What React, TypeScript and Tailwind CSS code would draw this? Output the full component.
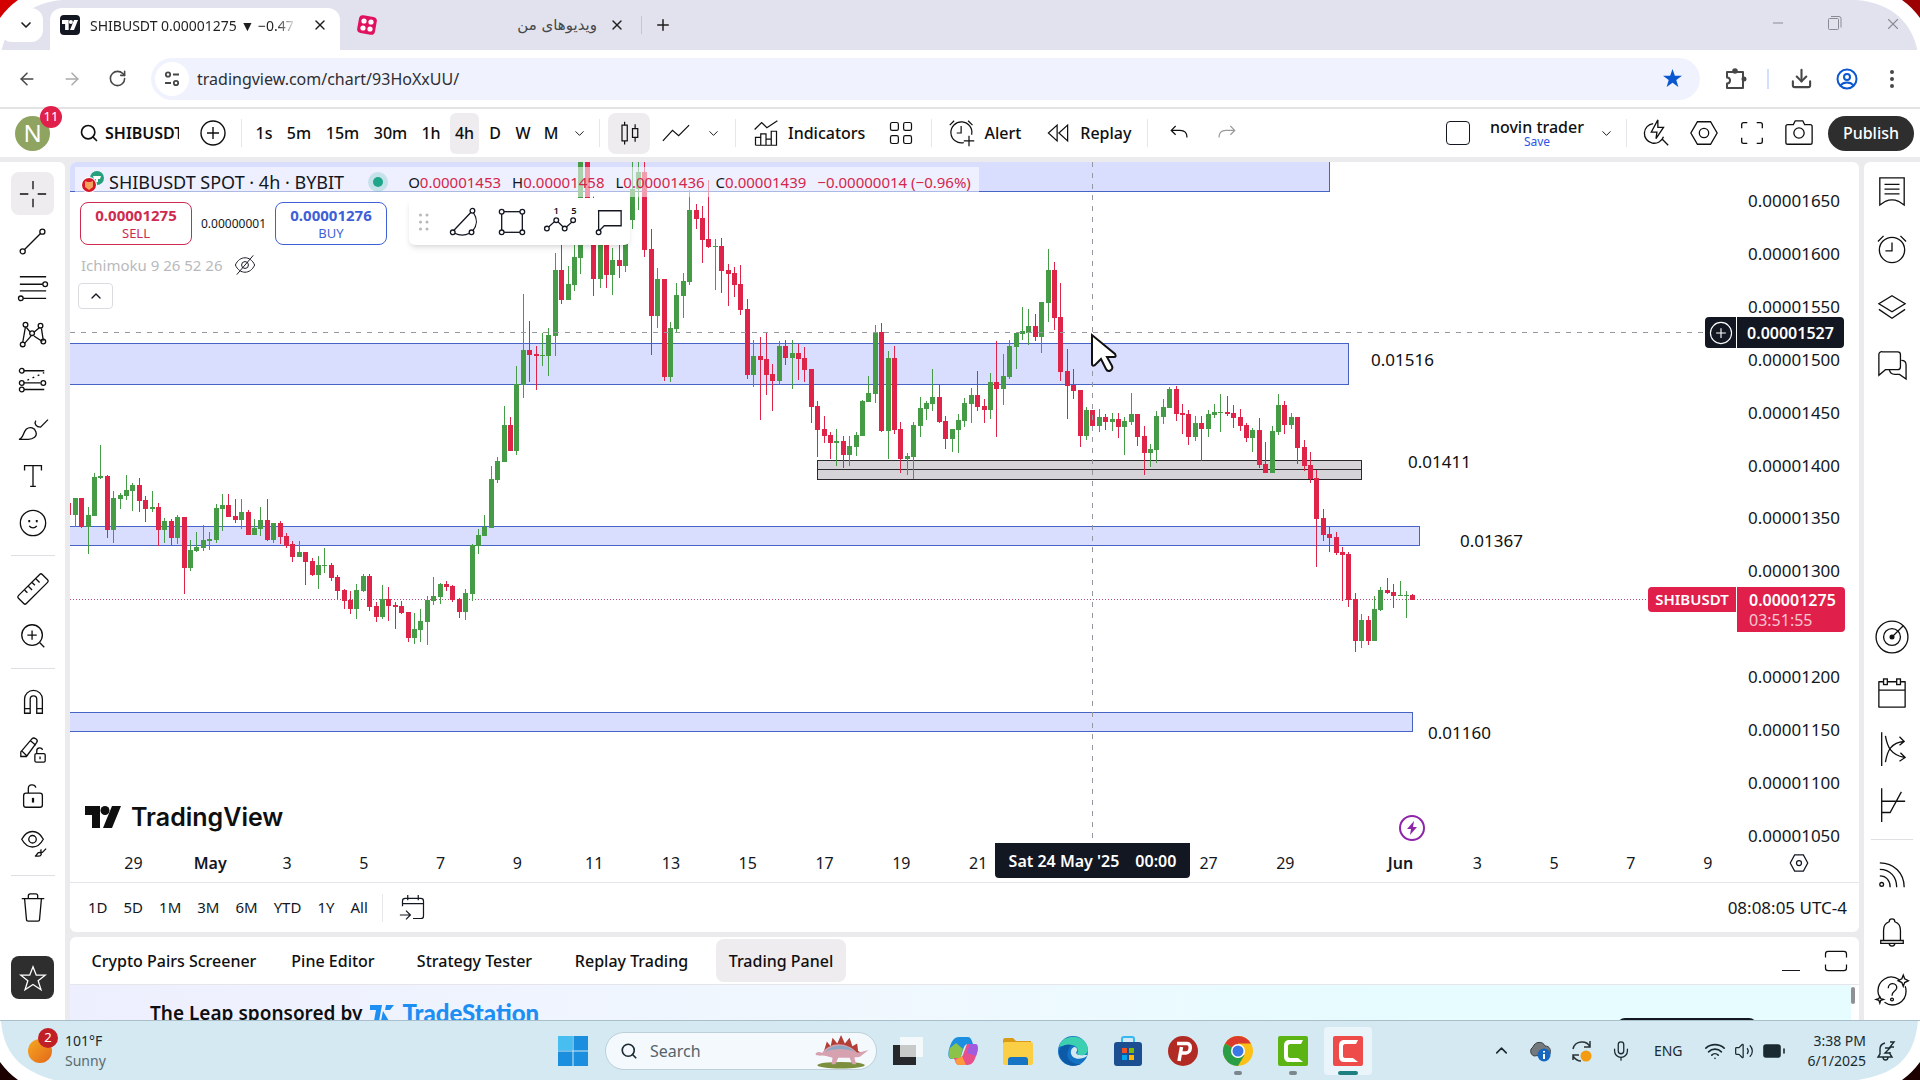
import React from "react";
import {
  ArrowLeft,
  ArrowRight,
  Battery,
  ChevronDown,
  ChevronUp,
  Download,
  EllipsisVertical,
  Mic,
  Minus,
  Plus,
  RotateCw,
  Search,
  Volume2,
  Wifi,
  X,
} from "lucide-react";

type Candle = [string, number, number, number, number];

// colour, high, body top, body bottom, low
const candles: Candle[] = [
  ["r", 341, 341, 353, 353], ["g", 336, 336, 353, 365], ["r", 336, 336, 365, 366], ["g", 345, 353, 365, 392],
  ["g", 311, 315, 354, 354], ["g", 283, 314, 316, 317], ["r", 313, 314, 368, 376], ["g", 329, 336, 368, 381],
  ["g", 331, 333, 337, 347], ["g", 313, 328, 334, 338], ["g", 321, 323, 329, 349], ["r", 316, 323, 339, 350],
  ["r", 334, 338, 347, 360], ["g", 329, 345, 347, 350], ["r", 341, 345, 368, 384], ["g", 356, 359, 368, 381],
  ["r", 357, 359, 376, 383], ["g", 353, 355, 376, 382], ["r", 355, 355, 406, 432], ["g", 378, 388, 406, 409],
  ["g", 370, 385, 389, 390], ["g", 363, 378, 386, 389], ["g", 370, 377, 379, 388], ["g", 342, 346, 378, 381],
  ["g", 332, 343, 347, 369], ["r", 332, 343, 355, 355], ["r", 337, 354, 358, 361], ["g", 337, 350, 358, 367],
  ["r", 348, 350, 373, 373], ["g", 357, 366, 373, 373], ["g", 345, 358, 367, 374], ["r", 337, 358, 378, 379],
  ["g", 361, 361, 378, 381], ["r", 359, 361, 375, 382], ["r", 371, 374, 384, 386], ["r", 379, 382, 395, 400],
  ["g", 379, 390, 395, 395], ["r", 390, 390, 400, 423], ["r", 396, 399, 413, 414], ["g", 394, 403, 413, 427],
  ["g", 386, 403, 404, 411], ["r", 401, 403, 416, 419], ["r", 413, 415, 429, 437], ["r", 427, 428, 439, 447],
  ["r", 429, 438, 447, 452], ["g", 422, 428, 447, 457], ["g", 412, 414, 429, 430], ["r", 412, 414, 445, 449],
  ["r", 440, 444, 455, 460], ["g", 423, 437, 455, 457], ["r", 425, 437, 444, 459], ["r", 440, 443, 445, 467],
  ["r", 439, 444, 451, 452], ["r", 450, 450, 476, 480], ["g", 451, 467, 476, 482], ["g", 447, 459, 468, 480],
  ["g", 434, 438, 460, 483], ["g", 415, 434, 439, 443], ["g", 421, 422, 435, 442], ["r", 419, 422, 425, 429],
  ["r", 423, 424, 438, 440], ["r", 436, 437, 450, 456], ["g", 427, 431, 450, 458], ["g", 382, 383, 432, 439],
  ["g", 367, 373, 384, 392], ["g", 353, 365, 374, 374], ["g", 304, 317, 366, 366], ["g", 295, 299, 318, 321],
  ["g", 244, 263, 300, 300], ["r", 255, 263, 289, 289], ["g", 204, 222, 289, 293], ["g", 132, 188, 223, 236],
  ["r", 159, 188, 193, 220], ["r", 184, 192, 194, 228], ["g", 171, 193, 194, 204], ["g", 166, 173, 194, 214],
  ["g", 91, 108, 174, 194], ["r", 81, 108, 138, 142], ["g", 104, 122, 138, 138], ["g", 81, 95, 123, 129],
  ["g", 0, 0, 96, 112], ["r", 0, 0, 58, 64], ["r", 34, 58, 117, 134], ["g", 64, 74, 117, 126],
  ["r", 64, 74, 113, 126], ["g", 86, 98, 113, 133], ["r", 81, 98, 104, 116], ["g", 58, 58, 104, 110],
  ["g", 0, 27, 58, 67], ["g", 0, 10, 27, 48], ["r", 0, 10, 88, 95], ["r", 67, 87, 154, 193],
  ["g", 106, 117, 154, 166], ["r", 117, 117, 215, 219], ["g", 160, 166, 215, 220], ["g", 121, 133, 167, 170],
  ["g", 111, 119, 134, 156], ["g", 28, 48, 120, 123], ["r", 42, 48, 57, 67], ["r", 44, 56, 78, 101],
  ["r", 18, 77, 85, 86], ["g", 77, 84, 85, 128], ["r", 76, 84, 109, 131], ["r", 102, 108, 112, 144],
  ["r", 105, 111, 123, 135], ["r", 103, 122, 148, 153], ["r", 137, 147, 213, 217], ["g", 178, 194, 213, 225],
  ["r", 175, 194, 198, 258], ["r", 170, 197, 213, 233], ["r", 202, 212, 219, 249], ["g", 179, 184, 219, 223],
  ["r", 178, 184, 196, 203], ["g", 178, 191, 196, 227], ["r", 182, 191, 197, 218], ["r", 185, 196, 208, 220],
  ["r", 207, 207, 245, 261], ["r", 239, 244, 268, 295], ["r", 254, 267, 274, 281], ["r", 270, 273, 281, 297],
  ["g", 267, 279, 281, 304], ["r", 274, 279, 293, 306], ["g", 274, 284, 293, 304], ["g", 270, 273, 285, 294],
  ["g", 238, 239, 274, 274], ["g", 214, 231, 240, 240], ["g", 163, 170, 232, 241], ["r", 161, 170, 269, 270],
  ["g", 189, 196, 269, 297], ["r", 184, 196, 268, 272], ["r", 260, 267, 297, 311], ["g", 291, 294, 297, 313],
  ["g", 260, 263, 295, 317], ["g", 235, 246, 264, 275], ["g", 239, 241, 247, 258], ["g", 207, 235, 242, 249],
  ["r", 223, 235, 260, 261], ["r", 254, 259, 277, 287], ["g", 267, 267, 277, 290], ["g", 252, 258, 268, 291],
  ["g", 236, 241, 259, 265], ["g", 226, 233, 242, 261], ["r", 209, 233, 245, 249], ["r", 237, 244, 248, 261],
  ["g", 211, 220, 248, 257], ["r", 179, 220, 227, 275], ["g", 192, 214, 227, 243], ["g", 178, 184, 215, 217],
  ["g", 170, 171, 185, 207], ["g", 145, 169, 172, 178], ["g", 147, 164, 171, 183], ["r", 152, 164, 175, 179],
  ["g", 140, 140, 175, 191], ["g", 87, 108, 141, 160], ["r", 100, 108, 156, 168], ["r", 121, 155, 210, 219],
  ["r", 187, 209, 224, 257], ["r", 207, 223, 229, 237], ["r", 228, 228, 274, 285], ["g", 245, 248, 274, 278],
  ["r", 248, 248, 264, 264], ["g", 247, 255, 264, 270], ["r", 252, 255, 260, 268], ["g", 251, 257, 260, 269],
  ["r", 251, 257, 265, 276], ["g", 255, 259, 265, 293], ["g", 231, 252, 260, 263], ["r", 252, 252, 275, 284],
  ["r", 264, 274, 291, 313], ["g", 282, 287, 291, 305], ["g", 249, 254, 288, 301], ["g", 237, 245, 255, 262],
  ["g", 225, 227, 246, 246], ["r", 224, 227, 252, 259], ["r", 242, 251, 253, 272], ["r", 248, 252, 275, 283],
  ["g", 254, 261, 275, 279], ["r", 254, 261, 267, 299], ["g", 248, 252, 267, 275], ["g", 242, 250, 253, 256],
  ["g", 232, 250, 251, 270], ["r", 234, 250, 252, 254], ["r", 243, 251, 256, 266], ["r", 247, 255, 264, 269],
  ["r", 261, 263, 276, 280], ["g", 266, 268, 276, 290], ["r", 256, 268, 303, 306], ["r", 280, 302, 311, 311],
  ["g", 264, 269, 311, 311], ["g", 232, 243, 270, 273], ["r", 239, 243, 263, 272], ["g", 251, 255, 263, 267],
  ["r", 255, 255, 286, 302], ["r", 278, 285, 304, 309], ["r", 290, 303, 317, 321], ["r", 308, 316, 357, 405],
  ["r", 347, 356, 373, 379], ["r", 365, 372, 376, 390], ["r", 370, 375, 391, 393], ["r", 385, 390, 393, 439],
  ["r", 390, 392, 438, 445], ["r", 431, 437, 479, 490], ["g", 452, 458, 479, 486], ["r", 454, 458, 479, 483],
  ["g", 434, 447, 479, 479], ["g", 425, 428, 448, 449], ["r", 416, 428, 431, 432], ["r", 422, 430, 434, 446],
  ["g", 419, 433, 434, 434], ["g", 429, 433, 434, 456], ["r", 432, 433, 438, 438],
];

const timeframes = [
  { label: "1s", width: "w-[32px]" },
  { label: "5m", width: "w-[38px]" },
  { label: "15m", width: "w-[49px]" },
  { label: "30m", width: "w-[47px]" },
  { label: "1h", width: "w-[34px]" },
  { label: "4h", width: "w-[29px] mx-0.5 bg-[#eeecef]" },
  { label: "D", width: "w-[28px]" },
  { label: "W", width: "w-[28px]" },
  { label: "M", width: "w-[28px]" },
];

const prices = [
  "0.00001650", "0.00001600", "0.00001550", "0.00001500", "0.00001450", "0.00001400", "0.00001350",
  "0.00001300", "", "0.00001200", "0.00001150", "0.00001100", "0.00001050",
];

// an empty label keeps the slot; days is the share of the axis it takes
const dates = [
  { label: "29", days: 2 },
  { label: "May", days: 2, bold: true },
  { label: "3", days: 2 },
  { label: "5", days: 2 },
  { label: "7", days: 2 },
  { label: "9", days: 2 },
  { label: "11", days: 2 },
  { label: "13", days: 2 },
  { label: "15", days: 2 },
  { label: "17", days: 2 },
  { label: "19", days: 2 },
  { label: "21", days: 2 },
  { label: "", days: 4 },
  { label: "27", days: 2 },
  { label: "29", days: 2 },
  { label: "", days: 1 },
  { label: "Jun", days: 2, bold: true },
  { label: "3", days: 2 },
  { label: "5", days: 2 },
  { label: "7", days: 2 },
  { label: "9", days: 2 },
];

const ranges = ["1D", "5D", "1M", "3M", "6M", "YTD", "1Y", "All"];

type IconProps = { children: React.ReactNode; className?: string };

function Icon({ children, className = "size-8" }: IconProps) {
  return (
    <svg
      viewBox="0 0 32 32"
      className={`shrink-0 ${className}`}
      fill="none"
      stroke="currentColor"
      strokeWidth="1.4"
    >
      {children}
    </svg>
  );
}

const leftTools = [
  {
    name: "Trend line",
    icon: (
      <>
        <circle cx="5" cy="27" r="2.7" />
        <circle cx="26" cy="6" r="2.7" />
        <path d="M7 25 24 8" />
      </>
    ),
  },
  {
    name: "Fib retracement",
    icon: (
      <>
        <path d="M2 4h28M2 12h25M2 19h28M5 27h25" />
        <circle cx="29" cy="12" r="2.5" fill="white" />
        <circle cx="3" cy="27" r="2.5" fill="white" />
      </>
    ),
  },
  {
    name: "Patterns",
    icon: (
      <>
        <path d="M8 7 5 24M9 8l4 5M7 25l7-8M17 13l6-5M17 17l9 6M25 9l2 13" />
        <circle cx="8" cy="5" r="2.5" />
        <circle cx="24" cy="6" r="2.5" />
        <circle cx="15" cy="14" r="2.5" />
        <circle cx="5" cy="26" r="2.5" />
        <circle cx="27" cy="23" r="2.5" />
      </>
    ),
  },
  {
    name: "Prediction",
    icon: (
      <>
        <path d="M6 4h22M6 17h18M6 24h22" />
        <path d="M10 14 28 6" strokeDasharray="2 4" />
        <circle cx="4" cy="4" r="2.5" />
        <circle cx="4" cy="17" r="2.5" />
        <circle cx="27" cy="17" r="2.5" fill="white" />
        <circle cx="4" cy="24" r="2.5" fill="white" />
      </>
    ),
  },
  {
    name: "Brush",
    icon: (
      <>
        <path d="M1 27c5-1 4-7 8-11 4-3 9-1 10 3 2 5-3 8-8 8H1Z" />
        <path d="M32 6 24 14c-5 0-7-4-5-7" />
      </>
    ),
  },
  { name: "Text", icon: <path d="M7 10V5h18v5M16 5v22M13 27h6" /> },
  {
    name: "Icon",
    icon: (
      <>
        <circle cx="16" cy="16" r="13.5" />
        <path d="M11 14h2M19 14h2" strokeWidth="2.4" />
        <path d="M12 19c2 3 6 3 8 0" />
      </>
    ),
  },
];

const measureTools = [
  {
    name: "Measure",
    icon: (
      <>
        <rect x="10" y="-2" width="12" height="36" rx="2" transform="rotate(45 16 16)" />
        <path d="m7 17 3 3M11 13l4 4M15 9l3 3M19 5l4 4" />
      </>
    ),
  },
  {
    name: "Zoom in",
    icon: (
      <>
        <circle cx="15" cy="15" r="11" />
        <path d="m23 23 5 5M15 10v10M10 15h10" />
      </>
    ),
  },
];

const stateTools = [
  {
    name: "Magnet",
    icon: (
      <path d="M7 28V13a9 9 0 0 1 19 0v15h-6V13a3.500 3.500 0 0 0-7 0v15H7ZM7 23h6M20 23h6" />
    ),
  },
  {
    name: "Stay in drawing mode",
    icon: (
      <>
        <path d="M3 19 15 5c2-2 7 1 5 4L9 24H3v-5ZM13 7l6 5M4 18l5 5" />
        <rect x="18" y="21" width="11" height="9" rx="1.500" />
        <path d="M20 21v-3c0-4 6-4 6-1M23.500 24v3" />
      </>
    ),
  },
  {
    name: "Lock all drawings",
    icon: (
      <>
        <rect x="6" y="13" width="20" height="15" rx="2.500" />
        <path d="M11 13V8c0-5 7-5 8-1" />
        <path d="M16 18v5" strokeWidth="2.400" />
      </>
    ),
  },
  {
    name: "Hide all drawings",
    icon: (
      <>
        <path d="M4 12c6-11 17-11 23 0-6 11-17 11-23 0Z" />
        <circle cx="15.500" cy="12" r="4" />
        <path d="M18 30c2 0 2-4 5-4 3 1 2 4-1 4h-4ZM30 22l-4 4c-2 0-2-2-1-3" />
      </>
    ),
  },
];

const rightTop = [
  {
    name: "Watchlist",
    icon: <path d="M3 2h26v29l-6-4q-7-3-14 0l-6 4V2ZM8 9h16M8 14h16M8 19h16" />,
  },
  {
    name: "Alerts",
    icon: (
      <>
        <circle cx="16" cy="17" r="13.500" />
        <path d="M16 9v9h-7M1 8l6-6M31 8l-6-6" />
      </>
    ),
  },
  {
    name: "Object tree",
    icon: <path d="m16 4 14 8.500L16 21 2 12.500 16 4ZM2 18.500 16 28l14-9.500" />,
  },
  {
    name: "Chats",
    icon: (
      <path d="M6 2h16a3 3 0 0 1 3 3v13a3 3 0 0 1-3 3H9l-7 6V5a3 3 0 0 1 4-3ZM13 21c1 4 3 5 6 5h5l7 5V16c0-3-2-5-5-5" />
    ),
  },
];

const rightMiddle = [
  {
    name: "Screener",
    icon: (
      <>
        <circle cx="16" cy="16" r="17" />
        <circle cx="16" cy="16" r="9" />
        <circle cx="16" cy="16" r="2" fill="currentColor" />
        <path d="m16 16 12-12" />
      </>
    ),
  },
  {
    name: "Calendar",
    icon: (
      <>
        <path d="M2 4h28v27H2V4ZM2 13h28" strokeLinejoin="round" />
        <rect x="7" y="1" width="4" height="6" fill="white" />
        <rect x="21" y="1" width="4" height="6" fill="white" />
      </>
    ),
  },
  {
    name: "Options",
    icon: (
      <path d="M5-2v36M9 2c2 12 6 20 20 23M9 30C11 18 15 9 29 8M24 3l5 5-5 4M25 20l5 5-6 4" />
    ),
  },
  { name: "DOM", icon: <path d="M5-2v36M5 12h25M5 24h9l12-22" /> },
];

const rightBottom = [
  {
    name: "Streams",
    icon: (
      <>
        <circle cx="5" cy="26" r="2" />
        <path d="M3 17c7 0 11 5 11 12M3 10c11 0 18 8 18 19M3 3c15 0 26 11 26 26" />
      </>
    ),
  },
  {
    name: "Notifications",
    icon: (
      <path d="M7 24V13c0-5 3-8 6-9 0-4 6-4 6 0 3 1 6 4 6 9v11M4 24h24v3H4v-3ZM13 27c0 4 6 4 6 0" />
    ),
  },
  {
    name: "Help",
    icon: (
      <>
        <path d="M24 4C12-4 1 6 1 16c0 3 1 5 2 7M8 28c10 7 23 0 23-12 0-2 0-3-1-5" />
        <path d="M12 13c0-7 10-6 9 0-1 4-5 3-5 8" />
        <circle cx="16" cy="25" r="1.500" />
        <path d="m28-1 1.500 4 4 2-4 2-1.500 4-1.500-4-4-2 4-2 1.500-4ZM3 22l1 2 3 1-3 1-1 3-1-3-3-1 3-1 1-2Z" />
      </>
    ),
  },
];

type Tool = { name: string; icon: React.ReactNode };

function ToolList({ tools, cell }: { tools: Tool[]; cell: string }) {
  return (
    <>
      {tools.map((t) => (
        <button key={t.name} aria-label={t.name} className={`flex w-full items-center justify-center ${cell}`}>
          <Icon className="size-[30px] overflow-visible">{t.icon}</Icon>
        </button>
      ))}
    </>
  );
}

function Divider() {
  return <div className="h-7 w-px shrink-0 bg-[#e6e6ea]" />;
}

function TvMark({ className = "" }: { className?: string }) {
  return (
    <svg viewBox="0 0 36 22" className={className} fill="currentColor">
      <path d="M0 0h15v22H7V9H0V0Z" />
      <circle cx="20" cy="4.500" r="4.500" />
      <path d="M27 0h9l-9 22h-9L27 0Z" />
    </svg>
  );
}

function BrowserTabs() {
  return (
    <div className="flex h-[50px] shrink-0 items-end bg-[#e1e2ee] text-[14px] text-[#1f1f1f]">
      <button aria-label="Search tabs" className="mb-2 flex h-[34px] w-[43px] items-center justify-center rounded-xl bg-white pl-2">
        <ChevronDown size={16} strokeWidth={2.5} />
      </button>
      <div className="ml-[7px] flex h-[42px] w-[290px] items-center rounded-t-xl bg-white pl-2.5 pr-3 pb-2">
        <span className="flex size-5 shrink-0 items-center justify-center rounded bg-[#131722] text-white">
          <TvMark className="h-2.5 w-4" />
        </span>
        <span className="ml-2.5 w-[207px] overflow-hidden whitespace-nowrap bg-linear-to-r from-[#1f1f1f] from-90% to-transparent bg-clip-text text-transparent">
          SHIBUSDT 0.00001275 ▼ −0.47
        </span>
        <button aria-label="Close tab" className="ml-auto">
          <X size={16} strokeWidth={2} />
        </button>
      </div>
      <div className="flex h-[42px] w-[301px] items-center pb-2 pl-[17px] pr-4">
        <svg viewBox="0 0 20 20" className="size-5">
          <rect x="1" y="1" width="18" height="18" rx="4" fill="#e0115f" transform="rotate(10 10 10)" />
          <g fill="#fff">
            <circle cx="7" cy="6" r="2.600" />
            <circle cx="14" cy="7" r="2.600" />
            <circle cx="6" cy="13" r="2.600" />
            <circle cx="13" cy="14" r="2.600" />
          </g>
        </svg>
        <span dir="rtl" className="ml-auto mr-3 font-['DejaVu_Sans',sans-serif] text-[15px] text-[#474747]">
          ویدیوهای من
        </span>
        <button aria-label="Close tab">
          <X size={16} strokeWidth={2} />
        </button>
      </div>
      <div className="mb-4 h-[18px] w-px bg-[#c5c6d0]" />
      <button aria-label="New tab" className="mb-4 ml-3">
        <Plus size={18} />
      </button>
      <div className="mb-[17px] ml-auto mr-[18px] flex gap-[41px] text-[#8b8b93]">
        <Minus size={16} strokeWidth={1.500} />
        <svg viewBox="0 0 16 16" className="size-4" fill="none" stroke="currentColor">
          <rect x="1.500" y="3.500" width="10" height="11" rx="1" />
          <path d="M4 1.500h8a2 2 0 0 1 2 2v9" />
        </svg>
        <X size={18} strokeWidth={1.500} />
      </div>
    </div>
  );
}

function AddressBar() {
  return (
    <div className="flex h-[59px] shrink-0 items-center border-b-2 border-[#e3e3e3] bg-white pl-[17px] pr-4 text-[#474747]">
      <ArrowLeft size={20} strokeWidth={1.800} />
      <ArrowRight size={20} strokeWidth={1.800} className="ml-[25px] text-[#aaa]" />
      <RotateCw size={19} strokeWidth={2} className="ml-[26px]" />
      <div className="ml-6 flex h-[42px] flex-1 items-center rounded-full bg-[#f0f2fe] pl-1 pr-[18px]">
        <span className="flex size-[34px] items-center justify-center rounded-full bg-white">
          <svg viewBox="0 0 18 18" className="size-[18px]" fill="none" stroke="currentColor" strokeWidth="1.800">
            <circle cx="5" cy="4.500" r="2.200" />
            <circle cx="13" cy="13" r="2.200" />
            <path d="M10 4.500h6M2 13h6" />
          </svg>
        </span>
        <input
          aria-label="Address"
          readOnly
          value="tradingview.com/chart/93HoXxUU/"
          className="ml-2 min-w-0 flex-1 bg-transparent text-[16px] text-[#2d2f33] outline-none"
        />
        <svg viewBox="0 0 20 20" className="size-[19px]" fill="#0b57d0">
          <path d="m10 0 2.500 7H20l-6 4.500L16.200 19 10 14.600 3.800 19 6 11.500 0 7h7.500L10 0Z" />
        </svg>
      </div>
      <svg viewBox="0 0 24 24" className="ml-[23px] size-6" fill="none" stroke="currentColor" strokeWidth="2">
        <path d="M4 5h16v16H4v-4.500a3 3 0 0 0 0-6V5Z" strokeLinejoin="round" />
        <circle cx="12" cy="4" r="1.800" fill="currentColor" />
        <circle cx="21" cy="12" r="1.500" fill="currentColor" />
      </svg>
      <div className="ml-5 h-5 w-0.5 bg-[#d3e0fb]" />
      <Download size={23} strokeWidth={2.200} className="ml-[21px]" />
      <svg viewBox="0 0 22 22" className="ml-[23px] size-[22px] text-[#0b57d0]" fill="none" stroke="currentColor" strokeWidth="2">
        <circle cx="11" cy="11" r="9.500" />
        <circle cx="11" cy="9" r="3" />
        <path d="M4.500 17.500c3-4 10-4 13 0" />
      </svg>
      <EllipsisVertical size={24} className="ml-[22px]" />
    </div>
  );
}

function Header() {
  return (
    <header className="flex h-12 shrink-0 items-center bg-white text-[16px] font-medium text-[#0f0f0f]">
      <div className="relative ml-[15px] flex size-[35px] items-center justify-center rounded-full bg-[#8fa461] text-[24px] font-normal text-white">
        N
        <span className="absolute -top-2.5 left-[25px] flex size-[22px] items-center justify-center rounded-full bg-[#e0204a] text-[13px]">
          11
        </span>
      </div>
      <button className="ml-[29px] flex items-center gap-1.5 font-semibold">
        <Search size={20} strokeWidth={2} />
        <span className="w-[74px] overflow-hidden whitespace-nowrap text-left">SHIBUSDT</span>
      </button>
      <button aria-label="Compare" className="ml-[18px]">
        <Icon className="size-8">
          <circle cx="16" cy="16" r="12" />
          <path d="M16 10v12M10 16h12" />
        </Icon>
      </button>
      <div className="ml-3">
        <Divider />
      </div>
      <div className="ml-1.5 flex">
        {timeframes.map((t) => (
          <button key={t.label} className={`flex h-[41px] items-center justify-center rounded-md ${t.width}`}>
            {t.label}
          </button>
        ))}
        <button aria-label="More intervals" className="flex w-7 items-center justify-center">
          <ChevronDown size={15} strokeWidth={1.500} />
        </button>
      </div>
      <div className="ml-1.5 mr-2">
        <Divider />
      </div>
      <button aria-label="Candles" className="flex h-[41px] w-[42px] items-center justify-center rounded-lg bg-[#eeecef]">
        <Icon className="size-7">
          <rect x="8" y="7" width="6" height="18" />
          <rect x="20" y="11" width="6" height="10" />
          <path d="M11 3v4M11 25v4M23 6v5M23 21v5" />
        </Icon>
      </button>
      <button aria-label="Line tools" className="ml-3">
        <Icon className="size-7">
          <path d="m1 25 11-12 7 6L31 7" />
        </Icon>
      </button>
      <ChevronDown size={15} strokeWidth={1.500} className="ml-4" />
      <div className="ml-3.5 mr-4">
        <Divider />
      </div>
      <button className="flex items-center gap-2">
        <Icon className="size-7">
          <path d="m3 12 8-8 6 6L29 2" />
          <path d="M4 30v-9h6v9M10 25v-8h6v13M16 23h6v7M22 30V14h6v16H4" />
        </Icon>
        <span>Indicators</span>
      </button>
      <button aria-label="Templates" className="ml-[22px]">
        <Icon className="size-7">
          <rect x="4" y="4" width="9" height="9" rx="2" />
          <rect x="19" y="4" width="9" height="9" rx="2" />
          <rect x="4" y="19" width="9" height="9" rx="2" />
          <rect x="19" y="19" width="9" height="9" rx="2" />
        </Icon>
      </button>
      <div className="ml-4 mr-4">
        <Divider />
      </div>
      <button className="flex items-center gap-2">
        <Icon className="size-7">
          <path d="M18 27A12 12 0 1 1 27 18M15 8v8h-5M2 7l5-5M28 7l-5-5M24 19v12M18 25h12" />
        </Icon>
        <span>Alert</span>
      </button>
      <button className="ml-[23px] flex items-center gap-2">
        <Icon className="size-7">
          <path d="M15 7v18L5 16l10-9ZM27 7v18l-10-9 10-9Z" />
        </Icon>
        <span>Replay</span>
      </button>
      <div className="ml-4 mr-[18px]">
        <Divider />
      </div>
      <button aria-label="Undo">
        <Icon className="size-7">
          <path d="M11 8 6 13l5 5M6 13h10c6 0 8 3 8 8" />
        </Icon>
      </button>
      <button aria-label="Redo" className="ml-[18px] text-[#9a9a9a]">
        <Icon className="size-7">
          <path d="m21 8 5 5-5 5M26 13H16c-6 0-8 3-8 8" />
        </Icon>
      </button>

      <div className="ml-auto flex items-center pr-1.5">
        <button aria-label="Layout" className="size-6 rounded border border-[#131722]" />
        <button className="ml-5 flex flex-col items-center">
          <span className="text-[16px] leading-[18px]">novin trader</span>
          <span className="text-[12px] leading-3 font-normal text-[#2f55e8]">Save</span>
        </button>
        <ChevronDown size={15} strokeWidth={1.500} className="ml-[15px]" />
        <div className="ml-3 mr-[14px]">
          <Divider />
        </div>
        <button aria-label="Quick search">
          <Icon className="size-[30px]">
            <path d="M13 6A10.500 10.500 0 1 0 24 20M23 23l6 6M18 2l-7 13h6l-1 7 8-12h-6V2Z" />
          </Icon>
        </button>
        <button aria-label="Settings" className="ml-[18px]">
          <Icon className="size-[30px]">
            <path d="M9 4h14l7 12-7 12H9L2 16 9 4Z" />
            <circle cx="16" cy="16" r="5" />
          </Icon>
        </button>
        <button aria-label="Fullscreen" className="ml-[18px]">
          <Icon className="size-[30px]">
            <path d="M5 11V7a2 2 0 0 1 2-2h4M21 5h4a2 2 0 0 1 2 2v4M27 21v4a2 2 0 0 1-2 2h-4M11 27H7a2 2 0 0 1-2-2v-4" />
          </Icon>
        </button>
        <button aria-label="Snapshot" className="ml-[17px]">
          <Icon className="size-[30px]">
            <path d="M4 7h6l2-4h8l2 4h6a2 2 0 0 1 2 2v17a2 2 0 0 1-2 2H4a2 2 0 0 1-2-2V9a2 2 0 0 1 2-2Z" />
            <circle cx="16" cy="16" r="5.500" />
          </Icon>
        </button>
        <button className="ml-3.5 h-[35px] w-[86px] rounded-full bg-[#2e2e2e] text-white">Publish</button>
      </div>
    </header>
  );
}

function LeftToolbar() {
  return (
    <aside className="flex w-[65px] shrink-0 flex-col items-center rounded-tr-md bg-white pt-2 text-[#0f0f0f]">
      <div className="flex h-[47px] items-center">
        <button aria-label="Cross" className="flex size-[43px] items-center justify-center rounded-lg bg-[#eeecef]">
          <Icon className="size-[30px]">
            <path d="M16 2v9M16 21v9M2 16h9M21 16h9" />
          </Icon>
        </button>
      </div>
      <ToolList tools={leftTools} cell="h-[47px]" />
      <div className="my-[9px] h-px w-11 shrink-0 bg-[#e0e0e4]" />
      <ToolList tools={measureTools} cell="h-[47px]" />
      <div className="my-[9px] h-px w-11 shrink-0 bg-[#e0e0e4]" />
      <ToolList tools={stateTools} cell="h-[47px]" />
      <div className="my-[9px] h-px w-11 shrink-0 bg-[#e0e0e4]" />
      <ToolList
        tools={[
          {
            name: "Remove objects",
            icon: <path d="M4 7h24M11 7V4c0-1 1-2 2-2h6c1 0 2 1 2 2v3M7 7l2 22c0 1 1 2 2 2h10c1 0 2-1 2-2l2-22" />,
          },
        ]}
        cell="h-[43px]"
      />
      <button aria-label="Favorites" className="mb-[21px] mt-auto flex size-[43px] items-center justify-center rounded-lg bg-[#2e2e2e] text-white">
        <Icon className="size-[30px]">
          <path d="m16 4 3.500 9H29l-7.500 6 3 9.500L16 23l-8.500 5.500 3-9.500L3 13h9.500L16 4Z" />
        </Icon>
      </button>
    </aside>
  );
}

function RightToolbar() {
  return (
    <aside className="flex w-14 shrink-0 flex-col items-center rounded-tl-md bg-white text-[#0f0f0f]">
      <ToolList tools={rightTop} cell="h-[58px]" />
      <div className="mt-auto" />
      <ToolList tools={rightMiddle} cell="h-[56px]" />
      <div className="my-1.5 h-px w-[42px] shrink-0 bg-[#e0e0e4]" />
      <ToolList tools={rightBottom} cell="h-[58px]" />
    </aside>
  );
}

function Chart() {
  const label = "fill-[#0f0f0f] text-[17px]";

  return (
    <svg viewBox="0 0 1667 681" className="block w-full overflow-visible" shapeRendering="crispEdges">
      <g fill="#d9deff" stroke="#4763c4">
        <rect x="-2" y="-2" width="1261" height="31" />
        <rect x="-2" y="181" width="1280" height="41" />
        <rect x="-2" y="364" width="1351" height="19" />
        <rect x="-2" y="550" width="1344" height="19" />
      </g>
      <rect x="747" y="298" width="544" height="19" fill="#d6d4d8" stroke="#2a2a2e" />
      <path d="M747 307.500h544" stroke="#2a2a2e" />
      <path d="M0 437.500h1578" stroke="#b5487c" strokeDasharray="1 2" />

      {candles.map(([color, high, top, bottom, low], i) => {
        const x = Math.round(1022.4 + 6.4 * (i - 160));

        return (
          <g key={i} fill={color === "g" ? "#459b46" : "#de2549"}>
            <rect x={x} y={high} width="1" height={Math.max(low - high, 1)} />
            <rect x={x - 2} y={top} width="5" height={Math.max(bottom - top, 1)} />
          </g>
        );
      })}

      <g stroke="#9598a1" strokeDasharray="5 6">
        <path d="M0 170.500h1635" />
        <path d="M1022.500 0v678" />
      </g>

      <text x="1301" y="204" className={label}>0.01516</text>
      <text x="1338" y="306" className={label}>0.01411</text>
      <text x="1390" y="385" className={label}>0.01367</text>
      <text x="1358" y="577" className={label}>0.01160</text>

      <g shapeRendering="auto">
        <circle cx="1342" cy="666" r="12" fill="white" stroke="#8e24aa" strokeWidth="2" />
        <path d="m1344 659-7 8h4l-1 6 7-8h-4l1-6Z" fill="#8e24aa" />
        <path
          d="M1022 173v29c0 2 1 2 3 1l6-6 5 10c2 4 8 1 6-3l-5-9h7c2 0 2-1 1-3Z"
          fill="white"
          stroke="#111"
          strokeWidth="2"
        />
      </g>
    </svg>
  );
}

function Legend() {
  const values = [
    ["O", "0.00001453"],
    ["H", "0.00001458"],
    ["L", "0.00001436"],
    ["C", "0.00001439"],
  ];

  return (
    <div className="absolute left-[5px] top-[5px] flex flex-col items-start text-[#131722]">
      <div className="flex h-[30px] items-center bg-white/55 pl-1.5 pr-2">
        <svg viewBox="0 0 24 24" className="size-6">
          <circle cx="16" cy="8" r="7" fill="#26a17b" />
          <path d="M12 6h8l-1 3h-2v3h-2V9h-2l-1-3Z" fill="#fff" />
          <circle cx="8" cy="15" r="8" fill="#fff" />
          <circle cx="8" cy="15" r="7" fill="#d8152a" />
          <path d="m4 11 2.500 1h3L12 11v6l-4 3-4-3v-6Z" fill="#f2a25c" />
        </svg>
        <span className="ml-1 text-[18px] leading-6">SHIBUSDT SPOT · 4h · BYBIT</span>
        <span className="ml-6 flex size-5 items-center justify-center rounded-full bg-[#22ab94]/20">
          <span className="size-2.5 rounded-full bg-[#1fa588]" />
        </span>
        <span className="ml-5 flex gap-[11px] text-[15px] leading-6">
          {values.map(([key, value]) => (
            <span key={key}>
              {key}
              <span className="text-[#d3264c]">{value}</span>
            </span>
          ))}
          <span className="text-[#d3264c]">−0.00000014 (−0.96%)</span>
        </span>
      </div>
      <div className="ml-[5px] mt-[5px] flex items-center">
        <button className="flex h-[43px] w-28 flex-col items-center justify-center rounded-lg border border-[#cf2b50] bg-white leading-[18px] text-[#cf2b50]">
          <span className="text-[15px] font-bold">0.00001275</span>
          <span className="text-[13px]">SELL</span>
        </button>
        <span className="w-[83px] text-center text-[12px]">0.00000001</span>
        <button className="flex h-[43px] w-28 flex-col items-center justify-center rounded-lg border border-[#3f5fd6] bg-white leading-[18px] text-[#3f5fd6]">
          <span className="text-[15px] font-bold">0.00001276</span>
          <span className="text-[13px]">BUY</span>
        </button>
      </div>
      <div className="ml-1.5 mt-2 flex h-6 items-center gap-3 text-[15px] text-[#b9b9bd]">
        Ichimoku 9 26 52 26
        <Icon className="size-[22px] text-[#131722]">
          <path d="M2 16c6-14 22-14 28 0-6 14-22 14-28 0ZM4 30 28 2" />
          <circle cx="16" cy="16" r="5" />
        </Icon>
      </div>
      <button aria-label="Collapse legend" className="ml-[3px] mt-1.5 flex h-[26px] w-[35px] items-center justify-center rounded border border-[#dcdce0] bg-white">
        <ChevronUp size={16} strokeWidth={2} />
      </button>
    </div>
  );
}

function DrawingBar() {
  return (
    <div className="absolute left-[339px] top-9 flex h-[47px] w-[221px] items-center rounded-md bg-white pl-2.5 text-[#131722] shadow-md">
      <svg viewBox="0 0 10 18" className="mr-5 h-[18px] w-2.5" fill="#b8b8bc">
        <circle cx="1.500" cy="2" r="1.500" />
        <circle cx="8" cy="2" r="1.500" />
        <circle cx="1.500" cy="9" r="1.500" />
        <circle cx="8" cy="9" r="1.500" />
        <circle cx="1.500" cy="16" r="1.500" />
        <circle cx="8" cy="16" r="1.500" />
      </svg>
      <div className="flex gap-[18px]">
        <button aria-label="Curve">
          <Icon className="size-[30px] overflow-visible">
            <path d="M5 25 24 5M26 6c6 9 3 15-1 20M6 28c6 3 12 2 16 0" />
            <circle cx="4" cy="27" r="2.500" fill="white" />
            <circle cx="24" cy="27" r="2.500" fill="white" />
            <circle cx="25" cy="4" r="2.500" fill="white" />
          </Icon>
        </button>
        <button aria-label="Rectangle">
          <Icon className="size-[30px] overflow-visible">
            <rect x="5" y="5" width="22" height="22" />
            <circle cx="5" cy="5" r="2.500" fill="white" />
            <circle cx="27" cy="5" r="2.500" fill="white" />
            <circle cx="5" cy="27" r="2.500" fill="white" />
            <circle cx="27" cy="27" r="2.500" fill="white" />
          </Icon>
        </button>
        <button aria-label="Elliott wave">
          <Icon className="size-[30px] overflow-visible">
            <path d="m2 23 10-9 9 9 10-9" />
            <circle cx="2" cy="23" r="2.500" fill="white" />
            <circle cx="12" cy="14" r="2.500" fill="white" />
            <circle cx="21" cy="23" r="2.500" fill="white" />
            <circle cx="30" cy="14" r="2.500" fill="white" />
            <g fill="currentColor" stroke="none" className="text-[10px] font-semibold">
              <text x="9" y="7">1</text>
              <text x="28" y="7">5</text>
            </g>
          </Icon>
        </button>
        <button aria-label="Callout">
          <Icon className="size-[30px] overflow-visible">
            <path d="M6 26V4h24v16H12l-6 6Z" />
            <circle cx="6" cy="27" r="2.500" fill="white" />
          </Icon>
        </button>
      </div>
    </div>
  );
}

function ChartPane() {
  return (
    <section className="flex flex-col overflow-hidden rounded-md bg-white text-[16px] text-[#131722]">
      <div className="relative flex">
        <div className="min-w-0 flex-1">
          <Chart />
        </div>
        <div className="flex w-[122px] flex-col justify-between pl-[11px] pt-8 text-[17px]">
          {prices.map((p, i) => (
            <span key={i} className="h-3.5 leading-[14px]">
              {p}
            </span>
          ))}
        </div>

        <Legend />
        <DrawingBar />

        <div className="absolute bottom-2.5 left-[15px] flex items-center gap-2.5 font-['Inter',sans-serif] text-[25px] font-semibold leading-8 text-[#0f0f0f]">
          <TvMark className="h-[22px] w-9" />
          TradingView
        </div>

        <div className="absolute right-[15px] top-[155px] flex h-[31px] gap-px text-[16px] font-semibold text-white">
          <button aria-label="Add alert" className="flex w-[31px] items-center justify-center rounded-l-sm bg-[#131722]">
            <Icon className="size-[26px]">
              <circle cx="16" cy="16" r="13" />
              <path d="M16 10v12M10 16h12" />
            </Icon>
          </button>
          <span className="flex w-[107px] items-center justify-center rounded-r-sm bg-[#131722]">0.00001527</span>
        </div>
        <div className="absolute right-3.5 top-[425px] flex items-start gap-px font-semibold text-white">
          <span className="flex h-[25px] w-[88px] items-center justify-center rounded-l-sm bg-[#e0204a] text-[15px]">SHIBUSDT</span>
          <span className="flex h-[45px] w-[108px] flex-col justify-center rounded-r-sm bg-[#e0204a] pl-3 leading-5">
            <span>0.00001275</span>
            <span className="font-normal text-white/75">03:51:55</span>
          </span>
        </div>
      </div>

      <div className="relative flex h-10 items-center border-b border-[#e6e6ea]">
        <div className="flex flex-1 pl-[25px]">
          {dates.map((d, i) => (
            <span
              key={i}
              className={`basis-0 text-center ${d.bold ? "font-semibold" : ""}`}
              style={{ flexGrow: d.days }}
            >
              {d.label}
            </span>
          ))}
        </div>
        <button aria-label="Axis settings" className="flex w-[113px] justify-center pr-2">
          <Icon className="size-5">
            <path d="M9 3h14l7 13-7 13H9L2 16 9 3Z" strokeWidth="2" />
            <circle cx="16" cy="16" r="4" strokeWidth="2" />
          </Icon>
        </button>
        <div className="absolute left-[925px] top-0 flex h-[35px] w-[195px] items-center justify-center gap-4 rounded-b-sm bg-[#131722] font-semibold text-white">
          <span>Sat 24 May '25</span>
          <span>00:00</span>
        </div>
      </div>

      <div className="flex h-[49px] items-center pl-[18px] pr-3">
        <div className="flex gap-4 text-[15px]">
          {ranges.map((r) => (
            <button key={r}>{r}</button>
          ))}
        </div>
        <div className="ml-3.5 mr-4">
          <Divider />
        </div>
        <button aria-label="Go to date">
          <Icon className="size-7">
            <path d="M4 14V8a3 3 0 0 1 3-3h18a3 3 0 0 1 3 3v17a3 3 0 0 1-3 3h-9M4 11h24M10 1v6M22 1v6M1 24h11M8 19l5 5-5 5" />
          </Icon>
        </button>
        <span className="ml-auto text-[17px]">08:08:05 UTC-4</span>
      </div>
    </section>
  );
}

function BottomPanel() {
  const tabs = [
    { label: "Crypto Pairs Screener", width: "w-[180px]" },
    { label: "Pine Editor", width: "w-[110px]" },
    { label: "Strategy Tester", width: "w-[145px]" },
    { label: "Replay Trading", width: "w-[141px]" },
    { label: "Trading Panel", width: "w-[130px] bg-[#eeecef]" },
  ];

  return (
    <section className="flex min-h-0 flex-1 flex-col overflow-hidden rounded-t-md bg-white text-[#0f0f0f]">
      <div className="flex h-12 shrink-0 items-center gap-3.5 border-b border-[#e6e6ea] pl-3.5 pr-[9px]">
        {tabs.map((t) => (
          <button key={t.label} className={`h-[43px] whitespace-nowrap rounded-lg text-[16px] font-medium ${t.width}`}>
            {t.label}
          </button>
        ))}
        <button aria-label="Minimize" className="ml-auto h-5 w-[18px] border-b border-[#131722]" />
        <button aria-label="Maximize" className="ml-2">
          <Icon className="size-7">
            <path d="M4 12V8a3 3 0 0 1 3-3h18a3 3 0 0 1 3 3v4M4 20v4a3 3 0 0 0 3 3h18a3 3 0 0 0 3-3v-4" />
          </Icon>
        </button>
      </div>
      <div className="flex min-h-0 flex-1 items-start justify-between overflow-hidden bg-linear-to-r from-[#eeeffe] via-[#f0f8fe] via-45% to-[#e6fcff] to-75% pl-20">
        <div className="flex items-center gap-2 pt-3 text-[19px] font-semibold leading-8">
          The Leap sponsored by
          <svg viewBox="0 0 24 20" className="h-5 w-6" fill="#1e8ff2">
            <path d="M0 2h12L9 18H4L6 7H0V2ZM14 2h10l-4 5h-5l1-5ZM13 8l6 10h-8l2-10Z" />
          </svg>
          <span className="font-['Lato',sans-serif] text-[24px] font-black text-[#1e8ff2]">TradeStation</span>
        </div>
        <div className="flex items-start">
          <button aria-label="Join" className="mr-[94px] mt-[33px] h-10 w-[140px] rounded-lg bg-[#131722]" />
          <div className="h-[35px] w-2 bg-white pt-0.5">
            <div className="h-[17px] w-1 rounded-full bg-[#8f8f94]" />
          </div>
        </div>
      </div>
    </section>
  );
}

const apps = [
  {
    name: "Task view",
    icon: (
      <>
        <rect x="0" y="9" width="23" height="20" fill="#26282b" />
        <rect x="7" y="1" width="23" height="20" fill="#fff" fillOpacity="0.750" />
      </>
    ),
  },
  {
    name: "Copilot",
    icon: (
      <>
        <path d="M11 1h9c3 0 4 4 5 7h-5c-3 0-4 3-5 6l-3 9H4c-5 0-4-7-2-13 2-5 4-9 9-9Z" fill="#1c8fe0" />
        <path d="M2 12c-2 6-2 11 3 11h7l3-10-7-6Z" fill="#8bc34a" />
        <path d="M19 29h-8c-3 0-4-4-5-7h5c3 0 4-3 5-6l3-8h7c5 0 4 7 2 12-2 6-4 9-9 9Z" fill="#e8508b" />
        <path d="M28 8c3 1 2 7 0 12l-9-3 3-9Z" fill="#a05be0" />
        <path d="M14 20 7 24c1 3 2 5 4 5h7Z" fill="#ff9a3c" />
      </>
    ),
  },
  {
    name: "File Explorer",
    icon: (
      <>
        <path d="M0 4c0-1 1-2 2-2h8l3 3h15v5H0V4Z" fill="#d99a16" />
        <rect y="6" width="30" height="23" rx="2" fill="#fbcf45" />
        <path d="M5 29v-5c0-2 1-3 3-3h14c2 0 3 1 3 3v5H5Z" fill="#1674c4" />
      </>
    ),
  },
  {
    name: "Edge",
    icon: (
      <>
        <circle cx="15" cy="15" r="15" fill="#1372c4" />
        <path d="M1 11C4-3 28-3 30 13c0 6-6 8-11 5 2-3 1-8-5-9-6 0-11 1-13 2Z" fill="#3dd0b0" />
        <path d="M11 13c-5 8 2 16 12 15-11 5-22-2-22-12 0-6 8-9 13-7-2 1-3 2-3 4Z" fill="#0c5aa8" />
        <path d="M16 11c-4 2-4 7-1 10 4 3 10 2 14-1 1-2-4 0-7-1-3 0-5-2-3-4 1-2-1-4-3-4Z" fill="#d3e8f1" />
      </>
    ),
  },
  {
    name: "Microsoft Store",
    icon: (
      <>
        <path d="M9 7V3c0-1 1-2 2-2h8c1 0 2 1 2 2v4" fill="none" stroke="#35b8f0" strokeWidth="2" />
        <rect x="1" y="6" width="28" height="24" rx="3" fill="#1b4f91" />
        <rect x="9" y="12" width="5" height="5" fill="#f25022" />
        <rect x="16" y="12" width="5" height="5" fill="#7fba00" />
        <rect x="9" y="19" width="5" height="5" fill="#00a4ef" />
        <rect x="16" y="19" width="5" height="5" fill="#ffb900" />
      </>
    ),
  },
  {
    name: "Psiphon",
    icon: (
      <>
        <circle cx="15" cy="15" r="15" fill="#b22a24" />
        <path d="m11 25 2.500-14M9 7.500h10c5 0 4 9.500-1 9.500h-4" fill="none" stroke="#fff" strokeWidth="3.500" />
      </>
    ),
  },
  {
    name: "Chrome",
    running: true,
    icon: (
      <>
        <circle cx="15" cy="15" r="15" fill="#fbc116" />
        <path d="M15 15 2 7.500A15 15 0 0 1 28 7.500H15Z" fill="#db3b2d" />
        <path d="M15 15 2 7.500A15 15 0 0 0 15 30l6.500-11Z" fill="#2a9d47" />
        <circle cx="15" cy="15" r="7" fill="#fff" />
        <circle cx="15" cy="15" r="5.500" fill="#3b78e7" />
      </>
    ),
  },
  {
    name: "Camtasia",
    running: true,
    icon: (
      <>
        <rect width="30" height="30" rx="2" fill="#5cb414" />
        <path d="M6 10c0-4 2-6 5-6h14l-2 4H12c-1 0-2 1-2 2v10c0 1 1 2 2 2h8l5 4H11c-3 0-5-2-5-6V10Z" fill="#fff" />
      </>
    ),
  },
  {
    name: "Camtasia Recorder",
    running: true,
    active: true,
    icon: (
      <>
        <rect width="30" height="30" rx="2" fill="#ee4b4b" />
        <path d="M6 10c0-4 2-6 5-6h14l-2 4H12c-1 0-2 1-2 2v10c0 1 1 2 2 2h8l5 4H11c-3 0-5-2-5-6V10Z" fill="#fff" />
      </>
    ),
  },
];

function Taskbar() {
  return (
    <footer className="flex h-[60px] shrink-0 items-center border-t border-[#a9bfca] bg-[#d4e9f1] text-[#1b2a30]">
      <div className="relative ml-7">
        <div className="size-6 rounded-full bg-linear-to-br from-[#f6a821] to-[#e2661a]" />
        <span className="absolute -top-[11px] left-2.5 flex size-5 items-center justify-center rounded-full bg-[#c01f26] text-[13px] text-white">
          2
        </span>
      </div>
      <div className="ml-[13px] w-20 text-[14px] leading-5">
        <p>101°F</p>
        <p className="text-[#5a6b72]">Sunny</p>
      </div>

      <button aria-label="Start" className="ml-[413px]">
        <svg viewBox="0 0 30 30" className="size-[30px]">
          <path d="M0 0h14.500v14.500H0ZM15.500 0H30v14.500H15.500ZM0 15.500h14.500V30H0ZM15.500 15.500H30V30H15.500Z" fill="#1b8fdd" />
          <path d="M0 0h14.500v14.500H0Z" fill="#48bdf0" />
        </svg>
      </button>
      <label className="ml-[17px] flex h-[38px] w-[272px] items-center rounded-full border border-[#bdd0d9] bg-[#f4f9fd] pl-3.5 pr-1.5">
        <Search size={18} strokeWidth={2.200} />
        <input
          type="text"
          aria-label="Search"
          placeholder="Search"
          className="ml-3 w-[120px] bg-transparent text-[16px] outline-none placeholder:text-[#55636a]"
        />
        <svg viewBox="0 0 56 38" className="ml-auto h-[36px] w-14">
          <ellipse cx="27" cy="34" rx="25" ry="3.500" fill="#7c8f3f" />
          <path d="M9 19 12 9l4 5 2-9 5 6 4-9 4 9 5-6 3 9 5-3 1 8 4 2Z" fill="#b23f35" />
          <path d="M0 22c2-3 5-2 7-1 9-12 26-12 37 0l12-3-9 7c-3 1-5 0-6 1l2 7h-4l-3-7H24l-3 7h-4l1-7c-5-1-9-3-13-2-2 0-5 0-5-2Z" fill="#d6a2b0" />
          <path d="M10 20c9-9 22-9 32 0-10-4-22-4-32 0Z" fill="#8aa7c4" />
        </svg>
      </label>
      <div className="ml-[7px] flex gap-[7px]">
        {apps.map((app) => (
          <button
            key={app.name}
            aria-label={app.name}
            className={`relative flex size-12 items-center justify-center rounded ${app.active ? "bg-[#eaf4fb]" : ""}`}
          >
            <svg viewBox="0 0 30 30" className="size-[30px] overflow-visible">
              {app.icon}
            </svg>
            {app.running && (
              <span
                className={`absolute bottom-0 h-1 rounded-full ${app.active ? "w-5 bg-[#1c8080]" : "w-2 bg-[#7b878d]"}`}
              />
            )}
          </button>
        ))}
      </div>

      <div className="ml-auto flex items-center pr-6">
        <ChevronUp size={19} />
        <svg viewBox="0 0 24 24" className="ml-[17px] size-6">
          <path d="M6 17a5 5 0 0 1-1-9c2-6 10-6 12-1 5 0 6 4 5 8Z" fill="#73797d" stroke="#3c4246" />
          <circle cx="16" cy="16" r="6.500" fill="#1567c0" />
          <path d="M16 15v5M16 12v1.500" stroke="#fff" strokeWidth="2" />
        </svg>
        <svg viewBox="0 0 24 24" className="ml-[18px] size-6" fill="none" stroke="#2a3338" strokeWidth="1.500">
          <path d="M3 10C5 1 17 1 20 8M20 2v6h-6M3 21v-5h6M3 17c2 3 4 5 8 5" />
          <circle cx="16" cy="17" r="5.500" fill="#f39c12" stroke="none" />
        </svg>
        <Mic size={22} strokeWidth={1.400} className="ml-4" />
        <span className="ml-[22px] text-[14px]">ENG</span>
        <Wifi size={22} strokeWidth={1.800} className="ml-[21px]" />
        <Volume2 size={20} strokeWidth={1.500} className="ml-2" />
        <Battery size={24} strokeWidth={1.600} className="ml-2 fill-[#1b2a30]" />
        <div className="ml-[22px] text-right text-[14px] leading-5">
          <p>3:38 PM</p>
          <p>6/1/2025</p>
        </div>
        <svg viewBox="0 0 20 22" className="ml-2.5 h-[22px] w-5" fill="none" stroke="currentColor" strokeWidth="1.400">
          <path d="M9 3C5 4 4 6 4 9v5l-2 3h14l-2-3v-2M7 17c0 4 5 4 5 0M9 8h5l-5 5h5M14 2h4l-4 5h4" />
        </svg>
      </div>
    </footer>
  );
}

// rounded screen corners drawn over everything else
function Corners() {
  return (
    <div className="pointer-events-none">
      <svg viewBox="0 0 80 56" className="absolute left-0 top-0 h-14 w-20">
        <path d="M0 0h62C34 2 8 18 1 53H0Z" fill="#fff" />
        <path d="M0 0h18Q8 7 0 18Z" fill="#d40000" />
      </svg>
      <svg viewBox="0 0 80 56" className="absolute right-0 top-0 h-14 w-20">
        <path d="M80 0H16c30 2 56 18 62 53h2Z" fill="#fff" />
        <path d="M80 0H62q10 7 18 18Z" fill="#9c0000" />
      </svg>
      <svg viewBox="0 0 80 60" className="absolute bottom-0 left-0 h-[60px] w-20">
        <path d="M0 60h54C26 52 4 38 1 1H0Z" fill="#fff" />
        <path d="M0 60h18Q8 53 0 42Z" fill="#1c0000" />
      </svg>
      <svg viewBox="0 0 80 60" className="absolute bottom-0 right-0 h-[60px] w-20">
        <path d="M80 60H18c34-6 56-18 60-59h2Z" fill="#fff" />
        <path d="M80 60H62q10-7 18-18Z" fill="#1c0000" />
      </svg>
    </div>
  );
}

export default function App() {
  return (
    <div className="relative flex h-screen flex-col overflow-hidden bg-white font-['Noto_Sans',sans-serif]">
      <BrowserTabs />
      <AddressBar />
      <Header />
      <div className="h-[5px] shrink-0 bg-[#ebebed]" />
      <main className="flex min-h-0 flex-1 gap-[5px] bg-[#ebebed]">
        <LeftToolbar />
        <div className="flex min-w-0 flex-1 flex-col gap-[5px]">
          <ChartPane />
          <BottomPanel />
        </div>
        <RightToolbar />
      </main>
      <Taskbar />
      <Corners />
    </div>
  );
}
